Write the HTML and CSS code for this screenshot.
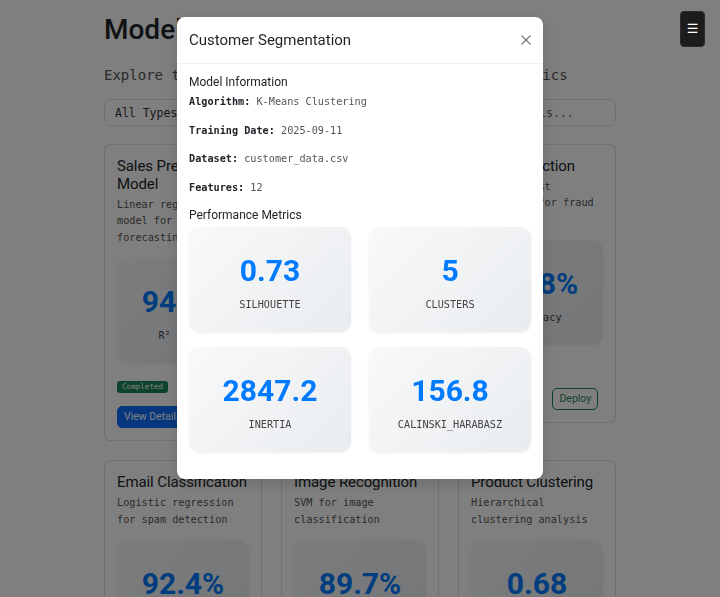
FILE: index.html
```html
<!DOCTYPE html>
<html lang="en">
<head>
<meta charset="utf-8">
<title>Model Dashboard</title>
<link rel="stylesheet" href="styles.css">
</head>
<body>
<button class="menu-toggle" type="button">☰</button>
<main class="page">
  <h1 class="page-title">Model Dashboard</h1>
  <p class="subtitle">Explore trained ML models and their performance metrics</p>
  <div class="filters">
    <select class="control"><option>All Types</option></select>
    <select class="control"><option>All Status</option></select>
    <input class="control" type="text" placeholder="Search models...">
  </div>
  <div class="grid">
    <article class="card">
      <h5 class="card-title">Sales Prediction Model</h5>
      <p class="card-desc">Linear regression model for sales forecasting</p>
      <div class="metric"><div class="metric-value">94.2%</div><div class="metric-label">R² Score</div></div>
      <span class="badge">Completed</span>
      <div class="actions"><button class="btn btn-primary">View Details</button><button class="btn btn-outline">Deploy</button></div>
    </article>
    <article class="card">
      <h5 class="card-title">Sentiment Analysis</h5>
      <p class="card-desc">BERT-based text sentiment classifier</p>
      <div class="metric"><div class="metric-value">91.3%</div><div class="metric-label">F1 Score</div></div>
      <span class="badge">Completed</span>
      <div class="actions"><button class="btn btn-primary">View Details</button><button class="btn btn-outline">Deploy</button></div>
    </article>
    <article class="card">
      <h5 class="card-title">Fraud Detection</h5>
      <p class="card-desc">Random Forest classifier for fraud detection</p>
      <div class="metric"><div class="metric-value">96.8%</div><div class="metric-label">Accuracy</div></div>
      <span class="badge">Completed</span>
      <div class="actions"><button class="btn btn-primary">View Details</button><button class="btn btn-outline">Deploy</button></div>
    </article>
    <article class="card">
      <h5 class="card-title">Email Classification</h5>
      <p class="card-desc">Logistic regression for spam detection</p>
      <div class="metric"><div class="metric-value">92.4%</div><div class="metric-label">Accuracy</div></div>
      <span class="badge">Completed</span>
      <div class="actions"><button class="btn btn-primary">View Details</button><button class="btn btn-outline">Deploy</button></div>
    </article>
    <article class="card">
      <h5 class="card-title">Image Recognition</h5>
      <p class="card-desc">SVM for image classification</p>
      <div class="metric"><div class="metric-value">89.7%</div><div class="metric-label">Accuracy</div></div>
      <span class="badge">Completed</span>
      <div class="actions"><button class="btn btn-primary">View Details</button><button class="btn btn-outline">Deploy</button></div>
    </article>
    <article class="card">
      <h5 class="card-title">Product Clustering</h5>
      <p class="card-desc">Hierarchical clustering analysis</p>
      <div class="metric"><div class="metric-value">0.68</div><div class="metric-label">Silhouette</div></div>
      <span class="badge">Completed</span>
      <div class="actions"><button class="btn btn-primary">View Details</button><button class="btn btn-outline">Deploy</button></div>
    </article>
  </div>
</main>

<div class="overlay">
  <div class="modal">
    <div class="modal-header">
      <h5 class="modal-title">Customer Segmentation</h5>
      <button class="btn-close" type="button" aria-label="Close">
        <svg width="10" height="10" viewBox="0 0 10 10"><path d="M0.5 0.5 L9.5 9.5 M9.5 0.5 L0.5 9.5" stroke="#6c757d" stroke-width="1.1" fill="none"/></svg>
      </button>
    </div>
    <div class="modal-body">
      <h6 class="section-title">Model Information</h6>
      <p class="info"><strong>Algorithm:</strong> K-Means Clustering</p>
      <p class="info"><strong>Training Date:</strong> 2025-09-11</p>
      <p class="info"><strong>Dataset:</strong> customer_data.csv</p>
      <p class="info"><strong>Features:</strong> 12</p>
      <h6 class="section-title section-gap">Performance Metrics</h6>
      <div class="metric-grid">
        <div class="metric"><div class="metric-value">0.73</div><div class="metric-label metric-key">silhouette</div></div>
        <div class="metric"><div class="metric-value">5</div><div class="metric-label metric-key">clusters</div></div>
        <div class="metric"><div class="metric-value">2847.2</div><div class="metric-label metric-key">inertia</div></div>
        <div class="metric"><div class="metric-value">156.8</div><div class="metric-label metric-key">calinski_harabasz</div></div>
      </div>
    </div>
  </div>
</div>
</body>
</html>
```
FILE: styles.css
```css
html, body {
  margin: 0;
  padding: 0;
  overflow: hidden;
  background: #ffffff;
  color: #212529;
  font-family: Roboto, "Liberation Sans", sans-serif;
}

.page {
  width: 512px;
  margin: 0 auto;
  padding-top: 13px;
}

.page-title {
  margin: 0 0 18px;
  font-size: 28px;
  font-weight: 500;
  line-height: 1.2;
  color: #212529;
}

.subtitle {
  margin: 0 0 13px;
  font-family: "DejaVu Sans Mono", monospace;
  font-size: 14px;
  line-height: 21px;
  color: #555;
}

.filters {
  display: flex;
  gap: 10px;
  margin-bottom: 18px;
}

.control {
  flex: 1;
  min-width: 0;
  box-sizing: border-box;
  height: 27px;
  padding: 6px 10px 4px;
  border: 1px solid #dee2e6;
  border-radius: 6px;
  background: #fff;
  font-family: "DejaVu Sans Mono", monospace;
  font-size: 11.5px;
  line-height: 15px;
  color: #333;
  appearance: none;
  -webkit-appearance: none;
  outline: none;
}

.control::placeholder {
  color: #6a6a6a;
}

.grid {
  display: grid;
  grid-template-columns: repeat(3, 1fr);
  gap: 19px;
  align-items: start;
}

.card {
  border: 1px solid rgba(0, 0, 0, 0.12);
  border-radius: 6px;
  padding: 12px;
  background: #fff;
}

.card-title {
  margin: 0 0 4px;
  font-size: 15px;
  font-weight: 400;
  letter-spacing: -0.1px;
  line-height: 18px;
  color: #212529;
}

.card-desc {
  margin: 0 0 12px;
  font-family: "DejaVu Sans Mono", monospace;
  font-size: 10.2px;
  line-height: 16.5px;
  color: #555;
}

.metric {
  box-sizing: border-box;
  height: 105px;
  padding: 26px 8px 19px;
  border-radius: 10px;
  background: linear-gradient(135deg, #f8f9fa 0%, #e9ecef 100%);
  box-shadow: 0 1px 3px rgba(0, 0, 0, 0.06);
  text-align: center;
}

.metric-value {
  font-size: 30px;
  font-weight: 700;
  line-height: 36px;
  color: #007bff;
}

.metric-label {
  margin-top: 8px;
  font-family: "DejaVu Sans Mono", monospace;
  font-size: 10.2px;
  line-height: 16px;
  color: #444;
}

.metric-key {
  text-transform: uppercase;
}

.badge {
  display: inline-block;
  margin-top: 18px;
  padding: 2px 5px;
  border-radius: 3px;
  background: #198754;
  color: #fff;
  font-family: "DejaVu Sans Mono", monospace;
  font-size: 7.6px;
  line-height: 8px;
  vertical-align: top;
}

.actions {
  display: flex;
  gap: 10px;
  margin-top: 13px;
}

.btn {
  box-sizing: border-box;
  height: 22px;
  padding: 3px 6px;
  border-radius: 5px;
  font-family: Roboto, "Liberation Sans", sans-serif;
  font-size: 10.5px;
  line-height: 14px;
  font-weight: 400;
  cursor: pointer;
}

.btn-primary {
  background: #0d6efd;
  border: 1px solid #0d6efd;
  color: #fff;
}

.btn-outline {
  background: transparent;
  border: 1px solid #198754;
  color: #198754;
}

.menu-toggle {
  position: fixed;
  top: 11px;
  right: 15px;
  z-index: 20;
  width: 25px;
  height: 36px;
  padding: 0;
  border: 1px solid #2a2a2a;
  border-radius: 4px;
  background: #1c1c1c;
  color: #fff;
  font-family: "DejaVu Sans", sans-serif;
  font-size: 13px;
  line-height: 34px;
}

.overlay {
  position: fixed;
  inset: 0;
  z-index: 10;
  background: rgba(0, 0, 0, 0.5);
  display: flex;
  justify-content: center;
  align-items: flex-start;
}

.modal {
  width: 366px;
  margin-top: 17px;
  background: #fff;
  border-radius: 8px;
  box-shadow: 0 4px 16px rgba(0, 0, 0, 0.15);
}

.modal-header {
  display: flex;
  align-items: center;
  justify-content: space-between;
  padding: 12px;
  height: 22px;
  border-bottom: 1px solid #eceef0;
}

.modal-title {
  margin: 0;
  font-size: 15px;
  font-weight: 400;
  line-height: 22px;
  color: #1f2328;
}

.btn-close {
  display: flex;
  align-items: center;
  justify-content: center;
  width: 10px;
  height: 16px;
  padding: 0;
  border: 0;
  background: transparent;
}

.modal-body {
  padding: 11px 12px 12px;
}

.section-title {
  margin: 0 0 5px;
  font-size: 12px;
  font-weight: 400;
  line-height: 14px;
  color: #212529;
}

.section-gap {
  margin-bottom: 5px;
}

.info {
  margin: 0 0 12px;
  font-family: "DejaVu Sans Mono", monospace;
  font-size: 10.2px;
  line-height: 16.5px;
  color: #555;
}

.info strong {
  color: #212529;
  font-weight: 700;
}

.metric-grid {
  display: grid;
  grid-template-columns: 1fr 1fr;
  column-gap: 18px;
  row-gap: 15px;
  margin-bottom: 15px;
}
```
